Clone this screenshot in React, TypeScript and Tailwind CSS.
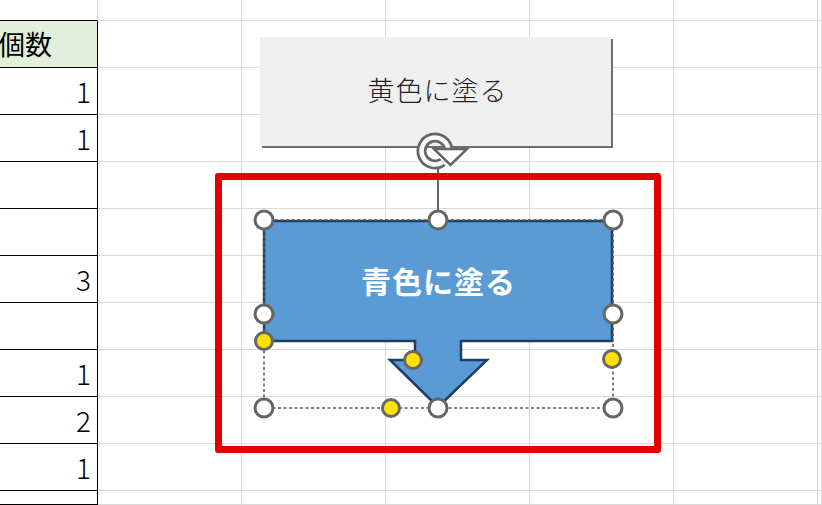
const values: (number | '')[] = [1, 1, '', '', 3, '', 1, 2, 1, ''];

const jp = 'font-["Noto_Sans_CJK_JP","Noto_Sans",sans-serif]';

function Sheet() {
	const cells = [];
	for (let r = 0; r < 12; r++) {
		for (let c = 0; c < 7; c++) {
			const key = `${r}-${c}`;
			if (c === 0) {
				if (r === 0) {
					cells.push(<div key={key} className="border-r border-b border-r-[#dadada] border-b-black" />);
				} else if (r === 1) {
					cells.push(
						<div
							key={key}
							className={`flex items-center overflow-hidden border-r border-b border-black bg-[#e2efda] text-[27px] text-black ${jp}`}
						>
							<span className="-ml-[2px] whitespace-nowrap">個数</span>
						</div>
					);
				} else {
					const v = values[r - 2];
					cells.push(
						<div
							key={key}
							className={`flex items-center justify-end border-r border-b border-black pr-[6px] text-[28px] font-light text-black ${jp}`}
						>
							{v}
						</div>
					);
				}
			} else {
				cells.push(<div key={key} className="border-r border-b border-[#dadada]" />);
			}
		}
	}
	return (
		<div className="grid h-full w-full grid-cols-[98px_144px_144px_144px_144px_144px_1fr] grid-rows-[21px_repeat(10,47px)_1fr]">
			{cells}
		</div>
	);
}

function Handle({ x, y, yellow }: { x: number; y: number; yellow?: boolean }) {
	return (
		<circle
			cx={x}
			cy={y}
			r={yellow ? 8.5 : 9}
			fill={yellow ? '#ffe100' : '#ffffff'}
			stroke="#666666"
			strokeWidth={3}
		/>
	);
}

function RotateHandle() {
	// circular arrow, outlined like Office's rotate grip
	const cx = 435;
	const cy = 151;
	const rr = 13.5;
	const a0 = (55 * Math.PI) / 180;
	const sx = cx + rr * Math.cos(a0);
	const sy = cy + rr * Math.sin(a0);
	const arc = `M${sx.toFixed(1)},${sy.toFixed(1)} A${rr},${rr} 0 1 1 ${cx + rr},${cy - 1}`;
	return (
		<g>
			<path d={arc} fill="none" stroke="#666666" strokeWidth={10} strokeLinecap="butt" />
			<path d={arc} fill="none" stroke="#ffffff" strokeWidth={4.5} strokeLinecap="butt" />
			<polygon
				points={`${cx - 1},${cy - 2} ${cx + 32},${cy - 2} ${cx + 15.5},${cy + 14}`}
				fill="#ffffff"
				stroke="#666666"
				strokeWidth={2.5}
				strokeLinejoin="miter"
			/>
		</g>
	);
}

function ShapeLayer() {
	return (
		<svg className="pointer-events-none absolute left-0 top-0" width={822} height={505}>
			{/* callout shape */}
			<path
				d="M264,221 H612 V341 H461 V360 H487 L438,407 L390,360 H415 V341 H264 Z"
				fill="#5b9bd5"
				stroke="#1f3f62"
				strokeWidth={2.5}
				strokeLinejoin="miter"
			/>
			{/* selection box */}
			<rect
				x={264}
				y={220}
				width={349}
				height={188}
				fill="none"
				stroke="#5a5a5a"
				strokeWidth={1.5}
				strokeDasharray="3 2.5"
			/>
			<line x1={438} y1={169} x2={438} y2={212} stroke="#666666" strokeWidth={2} />
			<RotateHandle />
			<Handle x={264} y={220} />
			<Handle x={438} y={220} />
			<Handle x={613} y={220} />
			<Handle x={264} y={314} />
			<Handle x={613} y={314} />
			<Handle x={264} y={408} />
			<Handle x={438} y={408} />
			<Handle x={613} y={408} />
			<Handle x={264} y={341} yellow />
			<Handle x={413} y={360} yellow />
			<Handle x={612} y={359} yellow />
			<Handle x={391} y={408} yellow />
		</svg>
	);
}

export default function App() {
	return (
		<div className="relative h-[505px] w-[822px] overflow-hidden bg-white">
			<Sheet />

			{/* form button */}
			<div
				className={`absolute left-[260px] top-[37px] flex h-[109px] w-[351px] items-center justify-center bg-[#efefef] shadow-[2px_2px_0_#6e6e6e] ${jp}`}
			>
				<span className="pb-[2px] pl-[4px] text-[27px] font-light tracking-[1px] text-[#222]">黄色に塗る</span>
			</div>

			<ShapeLayer />

			{/* shape text */}
			<div
				className={`absolute left-[264px] top-[221px] flex h-[120px] w-[349px] items-center justify-center ${jp}`}
			>
				<span className="pb-[1px] text-[30px] font-bold tracking-[1px] text-white">青色に塗る</span>
			</div>

			{/* red highlight */}
			<div className="absolute left-[215px] top-[173px] h-[280px] w-[446px] rounded-[3px] border-[7px] border-[#e30000]" />
		</div>
	);
}
